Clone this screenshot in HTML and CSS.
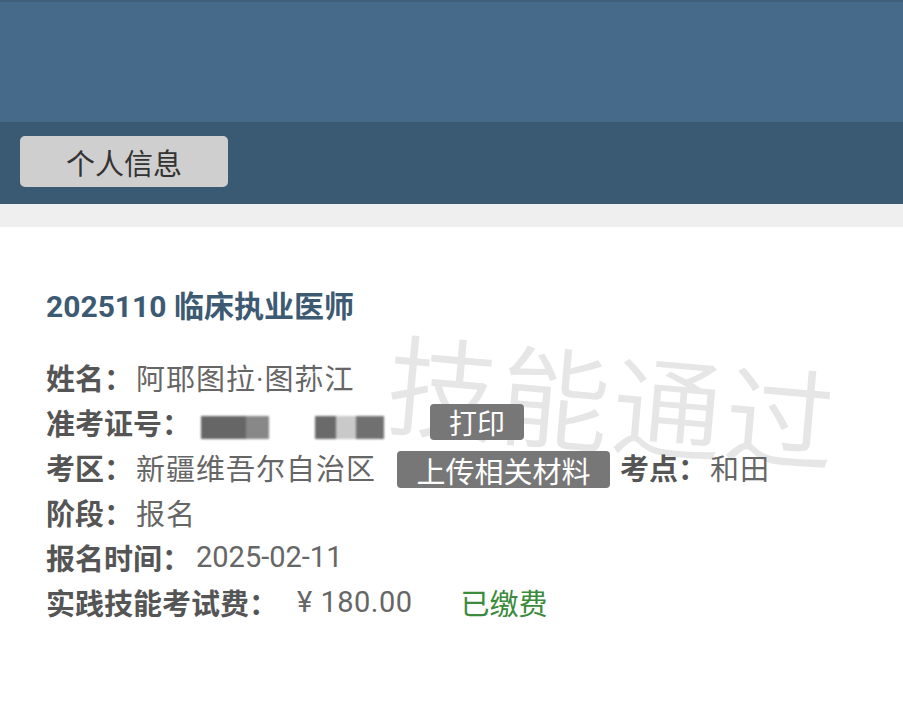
FILE: index.html
```html
<!DOCTYPE html>
<html lang="zh">
<head>
<meta charset="utf-8">
<link rel="stylesheet" href="styles.css">
</head>
<body>
<div class="topbar"></div>
<div class="navbar">
  <div class="tab">个人信息</div>
</div>
<div class="gap"></div>
<main class="content">
  <div class="watermark">技能通过</div>
  <h1 class="title">2025110 临床执业医师</h1>
  <div class="row"><span class="label">姓名：</span><span class="value cjk">阿耶图拉·图荪江</span></div>
  <div class="row"><span class="label">准考证号：</span>
    <span class="mask"><span class="blk b1"></span><span class="blk b2"></span></span>
    <span class="btn btn-print">打印</span></div>
  <div class="row"><span class="label">考区：</span><span class="value cjk">新疆维吾尔自治区</span>
    <span class="btn btn-upload">上传相关材料</span>
    <span class="label">考点：</span><span class="value cjk">和田</span></div>
  <div class="row"><span class="label">阶段：</span><span class="value cjk">报名</span></div>
  <div class="row"><span class="label">报名时间：</span><span class="value date">2025-02-11</span></div>
  <div class="row"><span class="label">实践技能考试费：</span><span class="value fee">¥ 180.00</span><span class="paid">已缴费</span></div>
</main>
</body>
</html>
```
FILE: styles.css
```css
* { box-sizing: border-box; }
html, body { margin: 0; padding: 0; background: #fff; }
body {
  width: 903px;
  height: 718px;
  overflow: hidden;
  font-family: Roboto, "Noto Sans CJK SC", sans-serif;
}
.topbar {
  height: 122px;
  background: #466b8a;
  border-top: 2px solid #3f5f7a;
}
.navbar {
  height: 82px;
  background: #3a5a74;
  padding: 14px 0 0 20px;
}
.tab {
  width: 208px;
  height: 51px;
  background: #cfcfcf;
  border-radius: 5px;
  color: #333;
  font-size: 29px;
  display: flex;
  align-items: center;
  justify-content: center;
  font-family: "Noto Sans CJK SC", sans-serif;
}
.gap {
  height: 23px;
  background: #efefef;
}
.content {
  position: relative;
  padding: 60px 0 0 46px;
}
.watermark {
  position: absolute;
  left: 393px;
  top: 96px;
  font-family: "Noto Sans CJK SC", sans-serif;
  font-weight: 350;
  font-size: 110px;
  letter-spacing: 3px;
  color: #e6e6e6;
  transform: rotate(5deg);
  transform-origin: left top;
  white-space: nowrap;
  line-height: 1;
}
.title {
  position: relative;
  margin: 0 0 27px;
  font-size: 30px;
  font-weight: 700;
  color: #3d5a73;
  line-height: 40px;
}
.row {
  position: relative;
  display: flex;
  align-items: center;
  height: 45px;
  font-size: 29px;
  color: #666;
}
.label {
  font-weight: 700;
  color: #555;
  font-family: "Noto Sans CJK SC", sans-serif;
}
.value {
  margin-left: 3px;
  color: #666;
}
.cjk { letter-spacing: 1px; }
.date { margin-left: 5px; }
.fee { margin-left: 19px; letter-spacing: 0.5px; }
.mask {
  display: flex;
  gap: 46px;
  margin-left: 10px;
  margin-top: 12px;
}
.blk {
  display: block;
  height: 23px;
  filter: blur(0.8px);
}
.b1 { width: 68px; background: linear-gradient(90deg, #666 0 66%, #888 66%); }
.b2 { width: 69px; background: linear-gradient(90deg, #6a6a6a 0 30%, #c9c9c9 30% 60%, #707070 60%); }
.btn {
  background: #777;
  color: #fff;
  border-radius: 4px;
  font-family: "Noto Sans CJK SC", sans-serif;
  display: flex;
  align-items: center;
  justify-content: center;
}
.btn-print {
  width: 94px;
  height: 36px;
  margin-left: 46px;
  font-size: 28px;
}
.btn-upload {
  width: 213px;
  height: 37px;
  margin: 6px 10px 0 21px;
  font-size: 29px;
}
.paid {
  margin-left: 48px;
  color: #3c8a3c;
  font-family: "Noto Sans CJK SC", sans-serif;
}
```
